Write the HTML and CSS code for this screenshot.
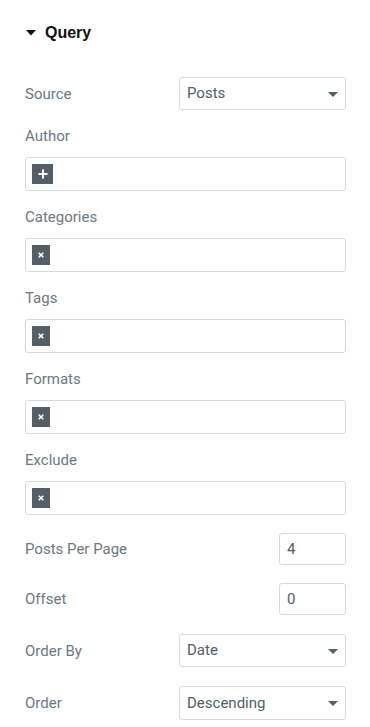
FILE: index.html
```html
<!DOCTYPE html>
<html>
<head>
<meta charset="utf-8">
<link rel="stylesheet" href="styles.css">
</head>
<body>
<div class="panel">
  <div class="section-head">
    <svg class="caret" width="10" height="6" viewBox="0 0 10 6"><path d="M0 0h10L5 5.5z" fill="#111"/></svg>
    <span class="section-title">Query</span>
  </div>

  <div class="row row-source">
    <span class="label">Source</span>
    <div class="select wide"><span>Posts</span><svg width="10" height="5" viewBox="0 0 10 5"><path d="M0 0h10L5 5z" fill="#555d66"/></svg></div>
  </div>

  <div class="block first">
    <div class="label">Author</div>
    <div class="tagbox"><span class="chip"><svg width="10" height="10" viewBox="0 0 10 10"><path d="M5 0.5v9M0.5 5h9" stroke="#fff" stroke-width="2"/></svg></span></div>
  </div>

  <div class="block">
    <div class="label">Categories</div>
    <div class="tagbox"><span class="chip small"><svg width="6" height="6" viewBox="0 0 6 6"><path d="M0.7 0.7l4.6 4.6M5.3 0.7L0.7 5.3" stroke="#fff" stroke-width="1.6"/></svg></span></div>
  </div>

  <div class="block">
    <div class="label">Tags</div>
    <div class="tagbox"><span class="chip small"><svg width="6" height="6" viewBox="0 0 6 6"><path d="M0.7 0.7l4.6 4.6M5.3 0.7L0.7 5.3" stroke="#fff" stroke-width="1.6"/></svg></span></div>
  </div>

  <div class="block">
    <div class="label">Formats</div>
    <div class="tagbox"><span class="chip small"><svg width="6" height="6" viewBox="0 0 6 6"><path d="M0.7 0.7l4.6 4.6M5.3 0.7L0.7 5.3" stroke="#fff" stroke-width="1.6"/></svg></span></div>
  </div>

  <div class="block">
    <div class="label">Exclude</div>
    <div class="tagbox"><span class="chip small"><svg width="6" height="6" viewBox="0 0 6 6"><path d="M0.7 0.7l4.6 4.6M5.3 0.7L0.7 5.3" stroke="#fff" stroke-width="1.6"/></svg></span></div>
  </div>

  <div class="rows">
    <div class="row">
      <span class="label">Posts Per Page</span>
      <div class="number">4</div>
    </div>
    <div class="row">
      <span class="label">Offset</span>
      <div class="number">0</div>
    </div>
    <div class="row">
      <span class="label">Order By</span>
      <div class="select wide"><span>Date</span><svg width="10" height="5" viewBox="0 0 10 5"><path d="M0 0h10L5 5z" fill="#555d66"/></svg></div>
    </div>
    <div class="row">
      <span class="label">Order</span>
      <div class="select wide tall"><span>Descending</span><svg width="10" height="5" viewBox="0 0 10 5"><path d="M0 0h10L5 5z" fill="#555d66"/></svg></div>
    </div>
  </div>
</div>
</body>
</html>
```

FILE: styles.css
```css
html, body {
  margin: 0;
  padding: 0;
  background: #fff;
}
body {
  font-family: Roboto, "Liberation Sans", sans-serif;
  font-size: 15px;
  color: #6d7882;
}
.panel {
  padding: 22px 24px 0 25px;
}
.section-head {
  display: flex;
  align-items: center;
  height: 22px;
}
.caret {
  margin-left: 1px;
  margin-right: 9px;
}
.section-title {
  font-family: "Liberation Sans", Arial, sans-serif;
  font-weight: 700;
  font-size: 16px;
  color: #111;
}
.label {
  line-height: 20px;
  color: #6d7882;
}
.row {
  display: flex;
  align-items: center;
  justify-content: space-between;
}
.row-source {
  margin-top: 33px;
}
.select {
  box-sizing: border-box;
  height: 33px;
  border: 1px solid #d5dadf;
  border-radius: 3px;
  display: flex;
  align-items: center;
  justify-content: space-between;
  padding: 0 7px 1px 7px;
  color: #555d66;
}
.select.tall {
  height: 34px;
}
.select svg {
  margin-top: 2px;
}
.wide {
  width: 167px;
}
.number {
  box-sizing: border-box;
  width: 67px;
  height: 32px;
  border: 1px solid #d5dadf;
  border-radius: 3px;
  padding: 0 7px 1px;
  display: flex;
  align-items: center;
  color: #555d66;
}
.block {
  margin-top: 16px;
}
.block .label {
  margin-bottom: 11px;
}
.tagbox {
  box-sizing: border-box;
  height: 34px;
  border: 1px solid #d5dadf;
  border-radius: 3px;
  display: flex;
  align-items: center;
  padding-left: 6px;
}
.chip {
  width: 21px;
  height: 20px;
  background: #555d66;
  display: flex;
  align-items: center;
  justify-content: center;
}
.chip.small {
  width: 18px;
}
.rows {
  margin-top: 18px;
  display: flex;
  flex-direction: column;
  gap: 18px;
}
.rows .row:nth-child(n+3) {
  margin-top: 1px;
}
```
